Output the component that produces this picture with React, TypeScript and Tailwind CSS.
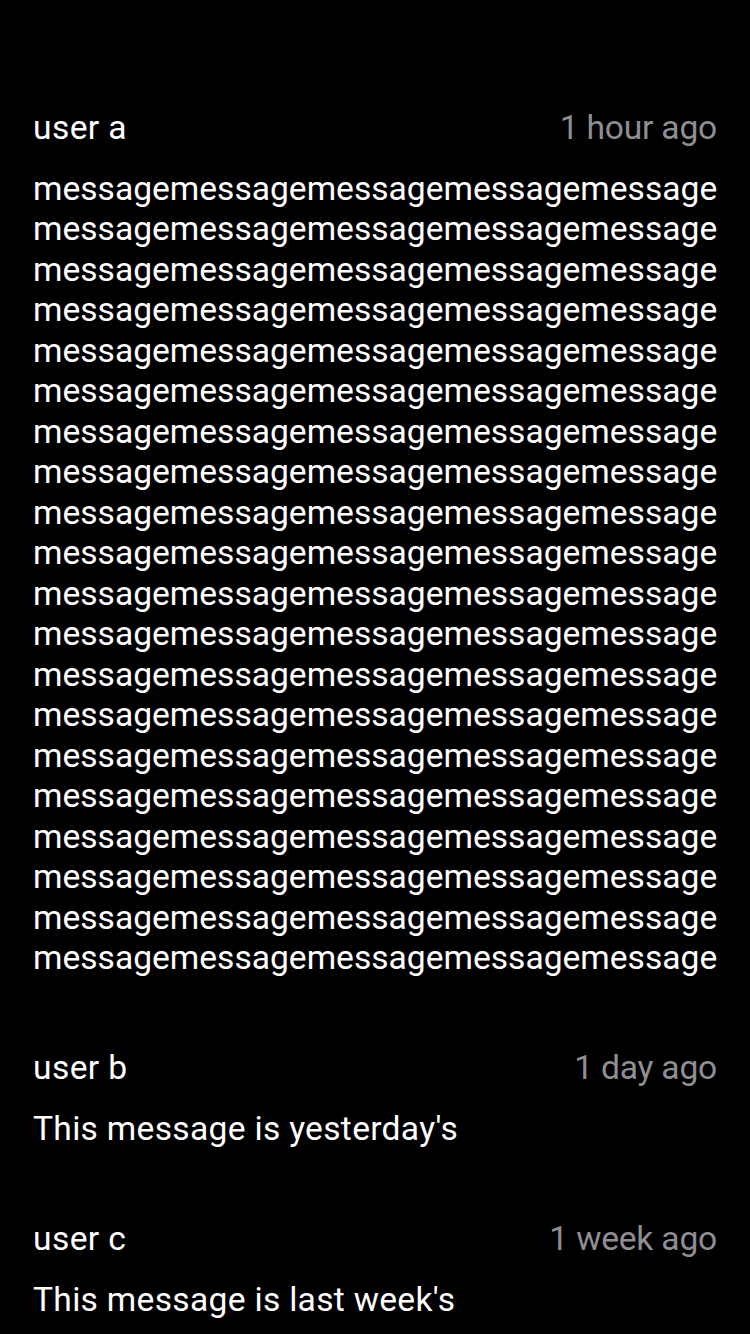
import React from 'react';

interface Message {
  user: string;
  time: string;
  lines: string[];
}

const longLine = 'message'.repeat(5);

const messages: Message[] = [
  { user: 'user a', time: '1 hour ago', lines: Array.from({ length: 20 }, () => longLine) },
  { user: 'user b', time: '1 day ago', lines: ["This message is yesterday's"] },
  { user: 'user c', time: '1 week ago', lines: ["This message is last week's"] },
];

const MessageItem: React.FC<{ message: Message }> = ({ message }) => {
  return (
    <div className="flex flex-col">
      <div className="flex items-center justify-between">
        <span className="text-white tracking-[0.4px]">{message.user}</span>
        <span className="text-[#8e8e93] tracking-[-0.2px]">{message.time}</span>
      </div>
      <div className="mt-[20.5px] text-white">
        {message.lines.map((line, i) => (
          <div key={i} className={line === longLine ? 'whitespace-nowrap' : 'whitespace-nowrap tracking-[0.3px]'}>
            {line}
          </div>
        ))}
      </div>
    </div>
  );
};

export default function App() {
  return (
    <div
      className="min-h-[1334px] w-[750px] bg-black px-[33px] pt-[107.5px] text-[33.6px] leading-[40.5px]"
      style={{ fontFamily: 'Roboto, "Liberation Sans", sans-serif' }}
    >
      <div className="flex flex-col gap-[69.5px]">
        {messages.map((m) => (
          <MessageItem key={m.user} message={m} />
        ))}
      </div>
    </div>
  );
}
